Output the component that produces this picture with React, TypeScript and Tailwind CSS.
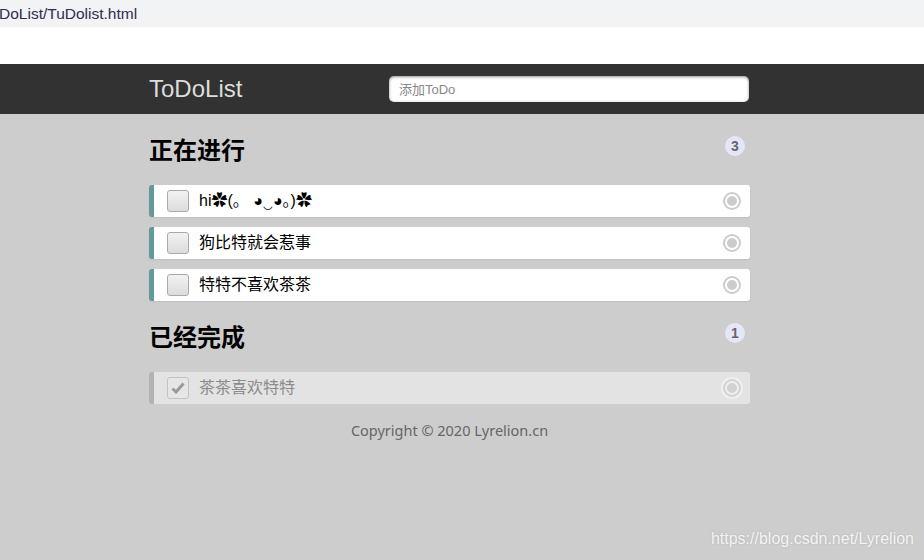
import React from 'react';

interface Todo {
    id: number;
    title: string;
    done: boolean;
}

const todos: Todo[] = [
    { id: 1, title: 'hi✿(。 ◕‿◕。)✿', done: false },
    { id: 2, title: '狗比特就会惹事', done: false },
    { id: 3, title: '特特不喜欢茶茶', done: false },
    { id: 4, title: '茶茶喜欢特特', done: true },
];

const font = { fontFamily: '"Liberation Sans", "Noto Sans CJK SC", sans-serif' };

function Heading({ title, count }: { title: string; count: number }) {
    return (
        <div className="flex justify-between h-[34px] mt-[20px] mb-[17px]">
            <h2 className="text-[24px] font-bold leading-[34px] text-black">{title}</h2>
            <span className="mt-[2px] mr-[5px] w-[20px] h-[20px] rounded-full bg-[#e6e6fa] text-[#666] text-[14px] font-bold leading-[20px] text-center">
                {count}
            </span>
        </div>
    );
}

function TodoItem({ todo }: { todo: Todo }) {
    return (
        <li
            className={`flex items-center h-[32px] rounded-[3px] border-l-[5px] ${todo.done
                ? 'bg-[#e3e3e3] border-[#b3b3b3]'
                : 'bg-white border-[#629a9c] shadow-[0_1px_2px_rgba(0,0,0,0.07)]'
                }`}
        >
            {/* checkbox */}
            <div
                className={`shrink-0 ml-[13px] w-[22px] h-[22px] rounded-[3px] border flex items-center justify-center ${todo.done
                    ? 'border-[#c4c4c4] bg-[#e6e6e6]'
                    : 'border-[#a9a9a9] bg-gradient-to-b from-[#f2f2f2] to-[#dcdcdc]'
                    }`}
            >
                {todo.done && (
                    <svg width="14" height="12" viewBox="0 0 14 12">
                        <path d="M1.5 6.5 L5 10 L12.5 1.5" fill="none" stroke="#9a9a9a" strokeWidth="3" />
                    </svg>
                )}
            </div>
            <span className={`ml-[10px] text-[16px] whitespace-pre ${todo.done ? 'text-[#8c8c8c]' : 'text-black'}`}>
                {todo.title}
            </span>
            {/* delete dot */}
            <span
                className={`shrink-0 ml-auto mr-[7px] w-[22px] h-[22px] rounded-full border-[6px] border-double ${todo.done
                    ? 'border-[#efefef] bg-[#d2d2d2]'
                    : 'border-white bg-[#cccccc]'
                    }`}
            />
        </li>
    );
}

export default function App() {
    const doing = todos.filter(t => !t.done);
    const done = todos.filter(t => t.done);

    return (
        <div className="relative min-h-[560px] bg-[#cdcdcd]" style={font}>
            {/* browser address strip */}
            <div className="h-[27px] bg-[#f1f3f4] text-[15.5px] leading-[27px] text-[#2f2c4f] -ml-[1px] overflow-hidden whitespace-nowrap">
                DoList/TuDolist.html
            </div>
            <div className="h-[37px] bg-white" />

            {/* header */}
            <header className="h-[50px] bg-[#323232]">
                <div className="ml-[149px] w-[601px] h-full flex items-center">
                    <span className="text-[24px] text-[#dddddd] leading-none">ToDoList</span>
                    <input
                        type="text"
                        placeholder="添加ToDo"
                        className="ml-auto mr-[1px] w-[360px] h-[26px] rounded-[5px] bg-white pl-[10px] text-[13px] placeholder:text-[#888] outline-none shadow-[inset_0_1px_3px_rgba(0,0,0,0.45)]"
                    />
                </div>
            </header>

            {/* content */}
            <main className="ml-[149px] w-[601px]">
                <Heading title="正在进行" count={doing.length} />
                <ul className="flex flex-col gap-[10px]">
                    {doing.map(t => <TodoItem key={t.id} todo={t} />)}
                </ul>

                <Heading title="已经完成" count={done.length} />
                <ul className="flex flex-col gap-[10px]">
                    {done.map(t => <TodoItem key={t.id} todo={t} />)}
                </ul>
            </main>

            <footer
                className="ml-[149px] w-[601px] mt-[16px] text-center text-[14.5px] leading-[20px] text-[#666]"
                style={{ fontFamily: '"Noto Sans", "Open Sans", sans-serif' }}
            >
                Copyright © 2020 Lyrelion.cn
            </footer>

            {/* watermark */}
            <div className="absolute right-[10px] bottom-[9px] text-[16px] text-[#f4f4f4] [text-shadow:0_0_2px_rgba(0,0,0,0.15)]">
                https://blog.csdn.net/Lyrelion
            </div>
        </div>
    );
}
